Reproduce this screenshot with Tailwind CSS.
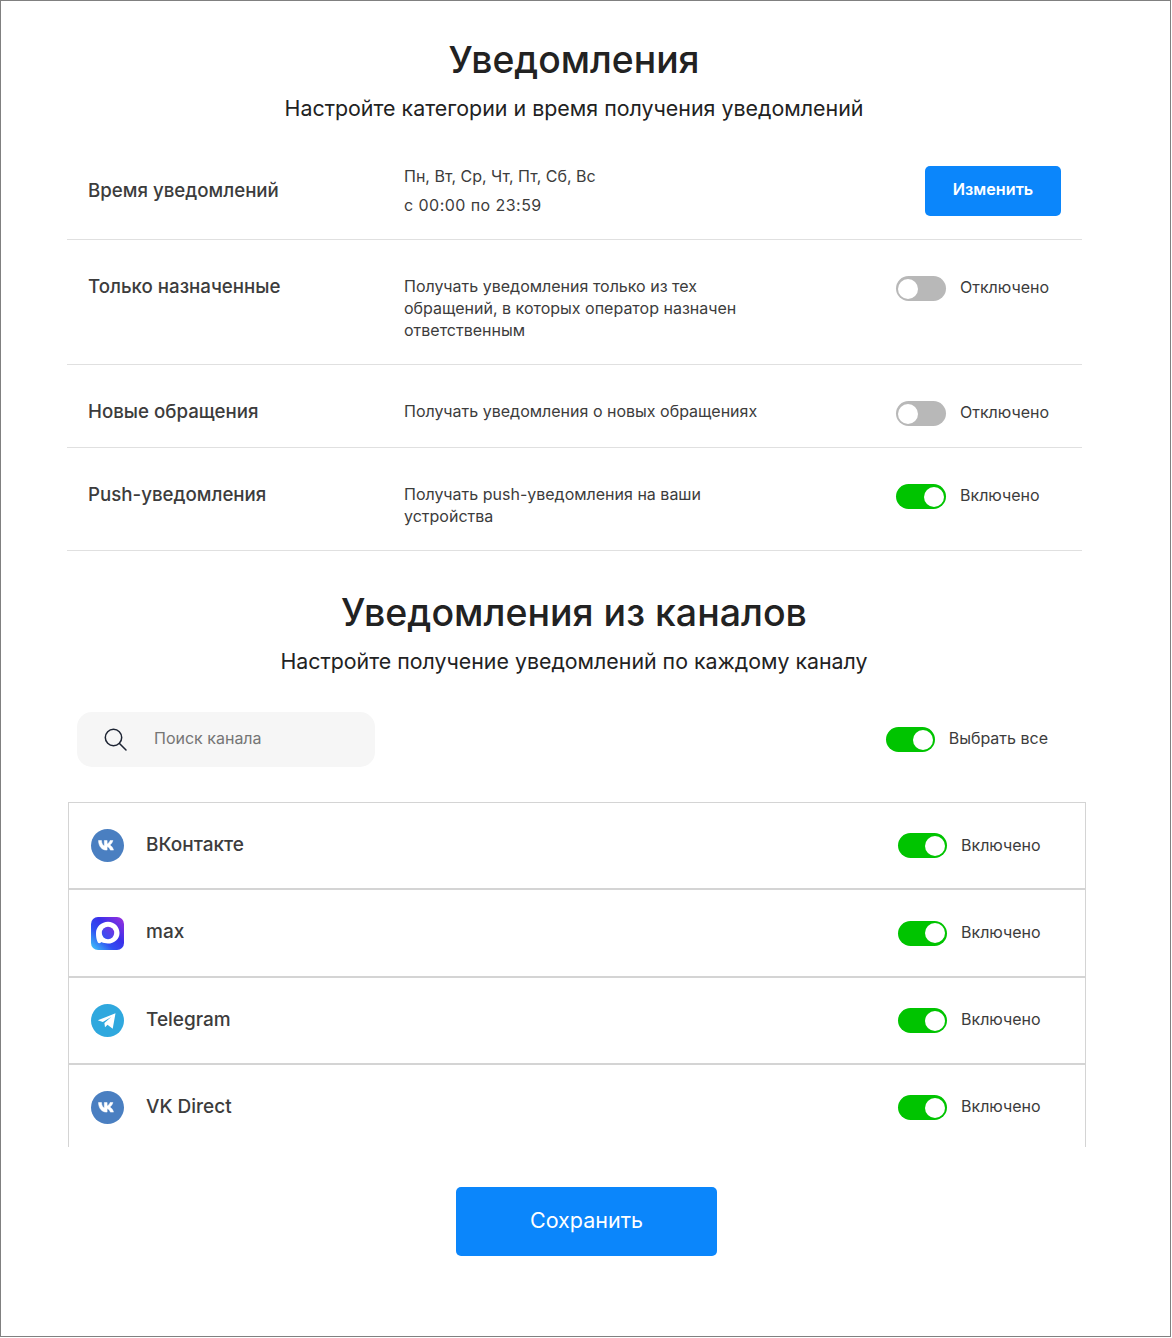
<!DOCTYPE html>
<html lang="ru"><head><meta charset="utf-8"><script src="https://cdn.jsdelivr.net/npm/@tailwindcss/browser@4"></script></head>
<body class="bg-white">
<div class="w-[1171px] h-[1337px] border border-[#808080] font-['Inter',sans-serif] text-[#3c3c3c] flex flex-col">
  <h1 class="mt-[36px] mr-[23px] text-center text-[37.3px] leading-[46px] font-medium text-[#222]">Уведомления</h1>
  <p class="mt-[11px] mr-[23px] text-center text-[21.4px] leading-[28px] text-[#222]">Настройте категории и время получения уведомлений</p>

  <div class="mt-[23px] ml-[66px] w-[1015px]">
    <div class="flex items-center h-[95px] border-b border-[#e0e0e0]">
      <div class="w-[337px] pl-[21px] pb-[2px] text-[18.7px] font-medium">Время уведомлений</div>
      <div class="flex-1 pb-[2px] text-[16px] leading-[29px]"><div>Пн, Вт, Ср, Чт, Пт, Сб, Вс</div><div class="tracking-[0.45px]">с 00:00 по 23:59</div></div>
      <button class="w-[136px] h-[50px] mr-[21px] mb-[2px] pb-[3px] rounded-[5px] bg-[#0b86fb] text-white text-[16.2px] font-semibold">Изменить</button>
    </div>
    <div class="flex items-start h-[125px] pt-[35px] border-b border-[#e0e0e0]">
      <div class="w-[337px] pl-[21px] text-[18.7px] leading-[24px] font-medium">Только назначенные</div>
      <div class="w-[492px] pr-[140px] text-[16px] leading-[22px]">Получать уведомления только из тех обращений, в которых оператор назначен ответственным</div>
      <div class="mt-[1px] flex items-start gap-[14px]"><span class="relative w-[50px] h-[25px] rounded-full bg-[#b8b8b8]"><span class="absolute left-[2px] top-[2.5px] size-[20px] rounded-full bg-white"></span></span><span class="text-[16px] leading-[22px]">Отключено</span></div>
    </div>
    <div class="flex items-start h-[83px] pt-[35px] border-b border-[#e0e0e0]">
      <div class="w-[337px] pl-[21px] text-[18.7px] leading-[24px] font-medium">Новые обращения</div>
      <div class="w-[492px] text-[16px] leading-[22px]">Получать уведомления о новых обращениях</div>
      <div class="mt-[1px] flex items-start gap-[14px]"><span class="relative w-[50px] h-[25px] rounded-full bg-[#b8b8b8]"><span class="absolute left-[2px] top-[2.5px] size-[20px] rounded-full bg-white"></span></span><span class="text-[16px] leading-[22px]">Отключено</span></div>
    </div>
    <div class="flex items-start h-[103px] pt-[35px] border-b border-[#e0e0e0]">
      <div class="w-[337px] pl-[21px] text-[18.7px] leading-[24px] font-medium">Push-уведомления</div>
      <div class="w-[492px] pr-[140px] text-[16px] leading-[22px]">Получать push-уведомления на ваши устройства</div>
      <div class="mt-[1px] flex items-start gap-[14px]"><span class="relative w-[50px] h-[25px] rounded-full bg-[#00c400]"><span class="absolute right-[2px] top-[2.5px] size-[20px] rounded-full bg-white"></span></span><span class="text-[16px] leading-[22px]">Включено</span></div>
    </div>
  </div>

  <h2 class="mt-[39px] mr-[23px] text-center text-[37.5px] leading-[46px] font-medium text-[#222]">Уведомления из каналов</h2>
  <p class="mt-[11px] mr-[23px] text-center text-[21.35px] leading-[28px] text-[#222]">Настройте получение уведомлений по каждому каналу</p>

  <div class="mt-[37px] flex items-center justify-between pl-[76px] pr-[122px]">
    <div class="flex items-center w-[298px] h-[55px] rounded-[15px] bg-[#f6f6f6] pl-[26px] gap-[26px]">
      <svg class="size-[25px]" viewBox="0 0 25 25" fill="none" stroke="#1d2433" stroke-width="1.5" stroke-linecap="round"><circle cx="10.5" cy="10.5" r="8.2"/><path d="M16.5 16.5 L23 23"/></svg>
      <span class="pb-[3px] text-[16px] text-[#757575]">Поиск канала</span>
    </div>
    <div class="flex items-start gap-[14px]"><span class="relative w-[49px] h-[25px] rounded-full bg-[#00c400]"><span class="absolute right-[2px] top-[2.5px] size-[20px] rounded-full bg-white"></span></span><span class="text-[16px] leading-[22px]">Выбрать все</span></div>
  </div>

  <div class="mt-[35px] ml-[67px] w-[1018px] h-[345px] border-x border-t border-[#d4d4d4] overflow-hidden">
    <div class="flex items-center h-[87px] border-b-2 border-[#d4d4d4] pl-[22px] pr-[45px]">
      <svg class="size-[33px] shrink-0" viewBox="0 0 33 33"><circle cx="16.5" cy="16.5" r="16.5" fill="#4a7fc1"/><path fill="#fff" stroke="#fff" stroke-width=".5" d="M7.500 11.500h3c.2 3.200 1.400 5 2.800 5.400v-5.400h2.800v3.400c1.300-.2 2.500-1.800 3-3.400h2.800c-.5 2.200-1.900 3.800-3.100 4.600 1.400.6 2.900 2.200 3.700 5h-3.100c-.5-1.800-1.900-3.200-3.300-3.400v3.400h-.5C11 21.100 7.700 17.700 7.500 11.500z"/></svg>
      <span class="ml-[22px] text-[19px] font-medium">ВКонтакте</span>
      <div class="ml-auto flex items-center gap-[14px] w-[142px]"><span class="relative w-[49px] h-[25px] shrink-0 rounded-full bg-[#00c400]"><span class="absolute right-[2px] top-[2.5px] size-[20px] rounded-full bg-white"></span></span><span class="pb-[2px] text-[16px]">Включено</span></div>
    </div>
    <div class="flex items-center h-[88px] border-b-2 border-[#d4d4d4] pl-[22px] pr-[45px]">
      <svg class="size-[33px] shrink-0" viewBox="0 0 33 33"><defs><linearGradient id="m" x1="0" y1="1" x2="1" y2="0"><stop offset="0" stop-color="#3fd0fa"/><stop offset=".35" stop-color="#2f50f2"/><stop offset=".6" stop-color="#3a30ea"/><stop offset="1" stop-color="#a02fdc"/></linearGradient><linearGradient id="n" x1="0" y1="1" x2="1" y2="0"><stop offset="0" stop-color="#2a55f5"/><stop offset="1" stop-color="#7a30e0"/></linearGradient></defs><rect width="33" height="33" rx="7" fill="url(#m)"/><path fill="#fff" d="M17 4.800c-6.500 0-12 5-12 11.300 0 2.900.3 5.600 1.100 7.600.4 1.100.9 2.600 2.200 2.600.9 0 1.500-.7 2.200-1.200 1.800 1 3.900 1.400 6.300 1.400 6.600 0 11.700-4.700 11.700-10.600S23.500 4.800 17 4.800z"/><circle cx="17" cy="16" r="6.200" fill="url(#n)"/></svg>
      <span class="ml-[22px] pb-[2px] text-[19px] font-medium">max</span>
      <div class="ml-auto flex items-center gap-[14px] w-[142px]"><span class="relative w-[49px] h-[25px] shrink-0 rounded-full bg-[#00c400]"><span class="absolute right-[2px] top-[2.5px] size-[20px] rounded-full bg-white"></span></span><span class="pb-[2px] text-[16px]">Включено</span></div>
    </div>
    <div class="flex items-center h-[87px] border-b-2 border-[#d4d4d4] pl-[22px] pr-[45px]">
      <svg class="size-[33px] shrink-0" viewBox="0 0 33 33"><circle cx="16.500" cy="16.500" r="16.500" fill="#2fa8de"/><path fill="#fff" d="M6.800 16.300 24.500 9.300 21.700 24.800 16.500 20.800 14 23.300 13.400 19 20.200 13 11.800 18z"/></svg>
      <span class="ml-[22px] text-[19px] font-medium">Telegram</span>
      <div class="ml-auto flex items-center gap-[14px] w-[142px]"><span class="relative w-[49px] h-[25px] shrink-0 rounded-full bg-[#00c400]"><span class="absolute right-[2px] top-[2.5px] size-[20px] rounded-full bg-white"></span></span><span class="pb-[4px] text-[16px]">Включено</span></div>
    </div>
    <div class="flex items-center h-[85px] pl-[22px] pr-[45px]">
      <svg class="size-[33px] shrink-0" viewBox="0 0 33 33"><circle cx="16.5" cy="16.5" r="16.5" fill="#4a7fc1"/><path fill="#fff" stroke="#fff" stroke-width=".5" d="M7.500 11.500h3c.2 3.200 1.400 5 2.800 5.400v-5.400h2.800v3.400c1.300-.2 2.500-1.800 3-3.400h2.800c-.5 2.200-1.900 3.800-3.100 4.600 1.400.6 2.900 2.200 3.700 5h-3.100c-.5-1.800-1.900-3.200-3.300-3.400v3.400h-.5C11 21.100 7.700 17.700 7.500 11.500z"/></svg>
      <span class="ml-[22px] text-[19px] font-medium">VK Direct</span>
      <div class="ml-auto flex items-center gap-[14px] w-[142px]"><span class="relative w-[49px] h-[25px] shrink-0 rounded-full bg-[#00c400]"><span class="absolute right-[2px] top-[2.5px] size-[20px] rounded-full bg-white"></span></span><span class="pb-[4px] text-[16px]">Включено</span></div>
    </div>
  </div>

  <button class="mt-[40px] ml-[455px] self-start w-[261px] h-[69px] pb-[2px] rounded-[5px] bg-[#0b86fb] text-white text-[21.5px]">Сохранить</button>
</div>
</body></html>
